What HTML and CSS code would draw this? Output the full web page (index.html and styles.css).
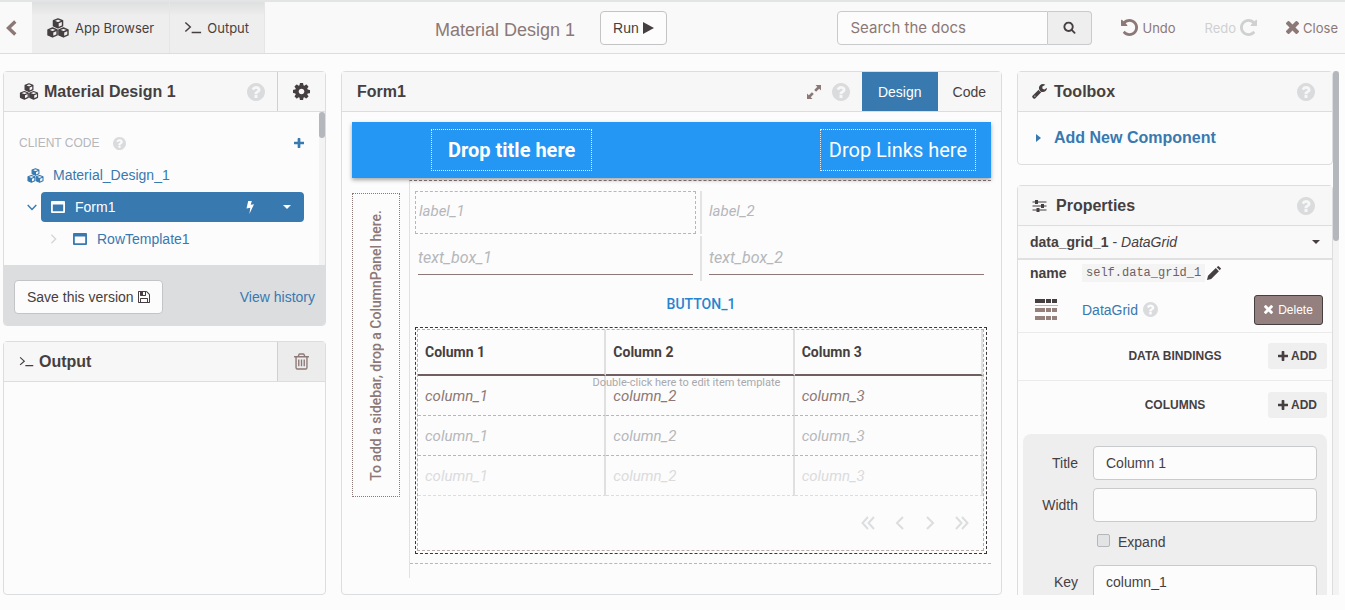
FILE: index.html
```html
<!DOCTYPE html>
<html lang="en">
<head>
<meta charset="utf-8">
<title>Material Design 1</title>
<link rel="stylesheet" href="styles.css">
</head>
<body>
<svg class="sprite" aria-hidden="true">
  <symbol id="cubes" viewBox="0 0 24 22"><g fill="none" stroke="currentColor" stroke-width="1.6" stroke-linejoin="round"><path d="M12 1l5 2v5.600L12 10.800 7 8.600V3zM7 3.200L12 5.400l5-2.200M12 5.400v5.400"/><path d="M6 11l5 2v5.600l-5 2.200-5-2.200V13zM1 13.200l5 2.200 5-2.200M6 15.400v5.400"/><path d="M18 11l5 2v5.600l-5 2.200-5-2.200V13zM13 13.200l5 2.200 5-2.200M18 15.400v5.400"/></g><path fill="currentColor" d="M7 3.200l5 2.200v5.400L7 8.600zM1 13.200l5 2.200v5.400l-5-2.200zM13 13.200l5 2.200v5.400l-5-2.200z"/></symbol>
  <symbol id="prompt" viewBox="0 0 20 14"><path d="M1.500 1.500L7 6.500l-5.500 5M8.500 12.500H19" fill="none" stroke="currentColor" stroke-width="1.600"/></symbol>
  <symbol id="help" viewBox="128 128 1536 1536"><path fill="currentColor" d="M1024 1376v-192q0-14-9-23t-23-9h-192q-14 0-23 9t-9 23v192q0 14 9 23t23 9h192q14 0 23-9t9-23zm256-672q0-88-55.500-163t-138.500-116-170-41q-243 0-371 213-15 24 8 42l132 100q7 6 19 6 16 0 25-12 53-68 86-92 34-24 86-24 48 0 85.500 26t37.500 59q0 38-20 61t-68 45q-63 28-115.500 86.500t-52.500 125.500v36q0 14 9 23t23 9h192q14 0 23-9t9-23q0-19 21.500-49.500t54.500-49.500q32-18 49-28.500t46-35 44.500-48 28-60.500 12.500-81zm384 192q0 209-103 385.500t-279.500 279.500-385.500 103-385.500-103-279.500-279.500-103-385.500 103-385.500 279.500-279.500 385.500-103 385.500 103 279.500 279.500 103 385.500z"/></symbol>
  <symbol id="cog" viewBox="128 128 1536 1536"><path fill="currentColor" d="M1152 896q0-106-75-181t-181-75-181 75-75 181 75 181 181 75 181-75 75-181zm512-109v222q0 12-8 23t-20 13l-185 28q-19 54-39 91 35 50 107 138 10 12 10 25t-9 23q-27 37-99 108t-94 71q-12 0-26-9l-138-108q-44 23-91 38-16 136-29 186-7 28-36 28h-222q-14 0-24.500-8.500t-11.500-21.500l-28-184q-49-16-90-37l-141 107q-10 9-25 9-14 0-25-11-126-114-165-168-7-10-7-23 0-12 8-23 15-21 51-66.500t54-70.500q-27-50-41-99l-183-27q-13-2-21-12.500t-8-23.500v-222q0-12 8-23t19-13l186-28q14-46 39-92-40-57-107-138-10-12-10-24 0-10 9-23 26-36 98.500-107.500t94.500-71.500q13 0 26 10l138 107q44-23 91-38 16-136 29-186 7-28 36-28h222q14 0 24.500 8.500t11.500 21.500l28 184q49 16 90 37l142-107q9-9 24-9 13 0 25 10 129 119 165 170 7 8 7 22 0 12-8 23-15 21-51 66.500t-54 70.500q26 50 41 98l183 28q13 2 21 12.500t8 23.500z"/></symbol>
  <symbol id="plus" viewBox="192 128 1408 1408"><path fill="currentColor" d="M1600 736v192q0 40-28 68t-68 28h-416v416q0 40-28 68t-68 28h-192q-40 0-68-28t-28-68v-416h-416q-40 0-68-28t-28-68v-192q0-40 28-68t68-28h416v-416q0-40 28-68t68-28h192q40 0 68 28t28 68v416h416q40 0 68 28t28 68z"/></symbol>
  <symbol id="search" viewBox="0 64 1792 1728"><path fill="currentColor" d="M1216 832q0-185-131.500-316.500t-316.500-131.500-316.500 131.500-131.500 316.500 131.500 316.500 316.500 131.500 316.500-131.500 131.500-316.500zm512 832q0 52-38 90t-90 38q-54 0-90-38l-343-342q-179 124-399 124-143 0-273.500-55.500t-225-150-150-225-55.500-273.500 55.500-273.500 150-225 225-150 273.500-55.500 273.500 55.500 225 150 150 225 55.500 273.500q0 220-124 399l343 343q37 37 37 90z"/></symbol>
  <symbol id="times" viewBox="302 366 1188 1188"><path fill="currentColor" d="M1490 1322q0 40-28 68l-136 136q-28 28-68 28t-68-28l-294-294-294 294q-28 28-68 28t-68-28l-136-136q-28-28-28-68t28-68l294-294-294-294q-28-28-28-68t28-68l136-136q28-28 68-28t68 28l294 294 294-294q28-28 68-28t68 28l136 136q28 28 28 68t-28 68l-294 294 294 294q28 28 28 68z"/></symbol>
  <symbol id="floppy" viewBox="128 128 1536 1536"><path fill="currentColor" d="M512 1536h768v-384h-768v384zm896 0h128v-896q0-14-10-38.500t-20-34.500l-281-281q-10-10-34-20t-39-10v416q0 40-28 68t-68 28h-576q-40 0-68-28t-28-68v-416h-128v1280h128v-416q0-40 28-68t68-28h832q40 0 68 28t28 68v416zm-384-928v-320q0-13-9.500-22.500t-22.500-9.500h-192q-13 0-22.500 9.500t-9.500 22.500v320q0 13 9.500 22.500t22.500 9.500h192q13 0 22.500-9.500t9.500-22.500zm640 32v928q0 40-28 68t-68 28h-1344q-40 0-68-28t-28-68v-1344q0-40 28-68t68-28h928q40 0 88 20t76 48l280 280q28 28 48 76t20 88z"/></symbol>
  <symbol id="trash" viewBox="192 128 1408 1536"><path fill="currentColor" d="M704 736v576q0 14-9 23t-23 9h-64q-14 0-23-9t-9-23v-576q0-14 9-23t23-9h64q14 0 23 9t9 23zm256 0v576q0 14-9 23t-23 9h-64q-14 0-23-9t-9-23v-576q0-14 9-23t23-9h64q14 0 23 9t9 23zm256 0v576q0 14-9 23t-23 9h-64q-14 0-23-9t-9-23v-576q0-14 9-23t23-9h64q14 0 23 9t9 23zm128 724v-948h-896v948q0 22 7 40.500t14.500 27 10.500 8.500h832q3 0 10.500-8.500t14.500-27 7-40.500zm-672-1076h448l-48-117q-7-9-17-11h-317q-10 2-17 11zm928 32v64q0 14-9 23t-23 9h-96v948q0 83-47 143.500t-113 60.500h-832q-66 0-113-58.500t-47-141.500v-952h-96q-14 0-23-9t-9-23v-64q0-14 9-23t23-9h309l70-167q15-37 54-63t79-26h320q40 0 79 26t54 63l70 167h309q14 0 23 9t9 23z"/></symbol>
  <symbol id="undo" viewBox="128 128 1536 1536"><path fill="currentColor" d="M1664 896q0 156-61 298t-164 245-245 164-298 61q-172 0-327-72.500t-264-204.500q-7-10-6.500-22.500t8.500-20.500l137-138q10-9 25-9 16 2 23 12 73 95 179 147t225 52q104 0 198.500-40.500t163.500-109.500 109.500-163.500 40.500-198.500-40.500-198.500-109.500-163.500-163.500-109.500-198.500-40.500q-98 0-188 35.500t-160 101.500l137 138q31 30 14 69-17 40-59 40h-448q-26 0-45-19t-19-45v-448q0-42 40-59 39-17 69 14l130 129q107-101 244.500-156.500t284.500-55.500q156 0 298 61t245 164 164 245 61 298z"/></symbol>
  <symbol id="redo" viewBox="0 0 16 16"><use href="#undo" width="16" height="16" transform="translate(16 0) scale(-1 1)"/></symbol>
  <symbol id="wrench" viewBox="64 128 1664 1664"><path fill="currentColor" d="M448 1472q0-26-19-45t-45-19-45 19-19 45 19 45 45 19 45-19 19-45zm644-420l-682 682q-37 37-90 37-52 0-91-37l-106-108q-38-36-38-90 0-53 38-91l681-681q39 98 114.500 173.500t173.500 114.500zm634-435q0 39-23 106-47 134-164.500 217.500t-258.500 83.500q-185 0-316.500-131.500t-131.500-316.500 131.500-316.500 316.500-131.500q58 0 121.500 16.500t107.500 46.500q16 11 16 28t-16 28l-293 169v224l193 107q5-3 79-48.500t135.500-81 70.500-35.500q15 0 23.500 10t8.500 25z"/></symbol>
  <symbol id="back" viewBox="0 0 11 16"><path d="M9.300 1.500L2.500 8l6.800 6.500" fill="none" stroke="currentColor" stroke-width="3.400"/></symbol>
  <symbol id="left" viewBox="0 0 10 14"><path d="M8 1L2 7l6 6" fill="none" stroke="currentColor" stroke-width="2"/></symbol>
  <symbol id="right" viewBox="0 0 10 14"><path d="M2 1l6 6-6 6" fill="none" stroke="currentColor" stroke-width="2"/></symbol>
  <symbol id="first" viewBox="0 0 14 14"><path d="M7 1L1.500 7 7 13M13 1L7.500 7l5.500 6" fill="none" stroke="currentColor" stroke-width="2"/></symbol>
  <symbol id="last" viewBox="0 0 14 14"><path d="M1 1l5.500 6L1 13M7 1l5.500 6L7 13" fill="none" stroke="currentColor" stroke-width="2"/></symbol>
  <symbol id="down" viewBox="0 0 10 7"><path d="M.7 1L5 5.500 9.300 1" fill="none" stroke="currentColor" stroke-width="1.400"/></symbol>
  <symbol id="window" viewBox="0 0 14 12"><path fill="currentColor" fill-rule="evenodd" d="M0 1q0-1 1-1h12q1 0 1 1v10q0 1-1 1H1q-1 0-1-1zM1.800 3.500v6.700h10.400V3.500z"/></symbol>
  <symbol id="bolt" viewBox="0 0 8 13"><path fill="currentColor" d="M2.200 0h3.600L4.700 3.800 8 3.200 3.400 13l.9-6.300L.5 7.500z"/></symbol>
  <symbol id="caret" viewBox="0 0 8 4"><path fill="currentColor" d="M0 0h8L4 4z"/></symbol>
  <symbol id="play" viewBox="0 0 11 12"><path fill="currentColor" d="M0 0l11 6L0 12z"/></symbol>
  <symbol id="side" viewBox="0 0 5 8"><path fill="currentColor" d="M0 0l5 4-5 4z"/></symbol>
  <symbol id="expand" viewBox="0 0 14 14"><path fill="currentColor" d="M8.500 0H14v5.500l-1.800-1.800-3.100 3.100-1.900-1.900 3.100-3.100zM5.500 14H0V8.500l1.800 1.800 3.100-3.100 1.900 1.900-3.100 3.100z"/></symbol>
  <symbol id="sliders" viewBox="0 0 14 12"><path fill="currentColor" d="M0 1.400h2.500V0h3v1.400H14v1.200H5.500V4h-3V2.600H0zM0 5.400h8.500V4h3v1.400H14v1.200h-2.500V8h-3V6.600H0zM0 9.400h4V8h3v1.400h7v1.200H7V12H4v-1.400H0z"/></symbol>
  <symbol id="pencil" viewBox="0 0 14 14"><path fill="currentColor" d="M0 14l1-4.200 7.800-7.700 3.100 3.100L4.200 13zM9.700 1.300L10.900.2q.4-.3.800 0l2.100 2.100q.3.400 0 .8l-1.100 1.200z"/></symbol>
  <symbol id="grid" viewBox="0 0 23 22"><path fill="#463f41" d="M0 0h10v4H0zM11 0h5v4h-5zM17 0h5v4h-5z"/><path fill="#b8b8bb" d="M0 6h23v1H0z"/><path fill="#96807d" d="M0 9h10v4H0zM11 9h5v4h-5zM17 9h5v4h-5zM0 17h10v4H0zM11 17h5v4h-5zM17 17h5v4h-5z"/></symbol>
</svg>

<div class="app">
  <header class="topbar">
    <button class="back" aria-label="Back"><svg width="11" height="16"><use href="#back"/></svg></button>
    <nav class="tabs">
      <button class="tab"><svg width="24" height="20"><use href="#cubes"/></svg>App Browser</button>
      <button class="tab"><svg width="18" height="13"><use href="#prompt"/></svg>Output</button>
    </nav>
    <h1 class="app-title">Material Design 1</h1>
    <button class="btn">Run <svg width="11" height="12"><use href="#play"/></svg></button>
    <form class="search">
      <input type="text" placeholder="Search the docs" aria-label="Search the docs">
      <button type="button" aria-label="Search"><svg width="13" height="13"><use href="#search"/></svg></button>
    </form>
    <div class="actions">
      <button><svg width="17" height="17"><use href="#undo"/></svg>Undo</button>
      <button disabled>Redo<svg width="17" height="17"><use href="#redo"/></svg></button>
      <button><svg width="13" height="13"><use href="#times"/></svg>Close</button>
    </div>
  </header>

  <main class="workspace">
    <aside class="left">
      <section class="panel">
        <div class="panel-head">
          <svg width="20" height="17"><use href="#cubes"/></svg>
          <h2>Material Design 1</h2>
          <button class="help push" aria-label="Help"><svg width="18" height="18"><use href="#help"/></svg></button>
          <button class="head-btn" aria-label="Settings"><svg width="17" height="17"><use href="#cog"/></svg></button>
        </div>
        <div class="tree-area">
          <div class="tree">
            <div class="tree-head">CLIENT CODE
              <button class="help" aria-label="Client code help"><svg width="13" height="13"><use href="#help"/></svg></button>
              <button class="add" aria-label="Add form"><svg width="10" height="10"><use href="#plus"/></svg></button>
            </div>
            <a class="node root" href="#"><svg width="17" height="15"><use href="#cubes"/></svg>Material_Design_1</a>
            <div class="branch">
              <button class="twist" aria-label="Collapse"><svg width="10" height="7"><use href="#down"/></svg></button>
              <div class="selected"><a href="#"><svg width="14" height="12"><use href="#window"/></svg>Form1</a>
                <button aria-label="Events"><svg width="8" height="13"><use href="#bolt"/></svg></button>
                <button aria-label="Menu"><svg width="8" height="4"><use href="#caret"/></svg></button>
              </div>
            </div>
            <div class="branch child">
              <button class="twist pale" aria-label="Expand"><svg width="7" height="10"><use href="#right"/></svg></button>
              <a class="node" href="#"><svg width="14" height="12"><use href="#window"/></svg>RowTemplate1</a>
            </div>
            <div class="tree-head next">
              <button class="help" aria-label="Help"><svg width="13" height="13"><use href="#help"/></svg></button>
              <button class="add" aria-label="Add module"><svg width="10" height="10"><use href="#plus"/></svg></button>
            </div>
          </div>
          <div class="scroll"><div class="thumb short"></div></div>
        </div>
        <div class="panel-foot">
          <button class="btn">Save this version <svg width="12" height="12"><use href="#floppy"/></svg></button>
          <a href="#">View history</a>
        </div>
      </section>
      <section class="panel grow">
        <div class="panel-head">
          <svg width="15" height="11"><use href="#prompt"/></svg>
          <h2>Output</h2>
          <button class="head-btn trash push" aria-label="Clear output"><svg width="15" height="17"><use href="#trash"/></svg></button>
        </div>
      </section>
    </aside>

    <section class="panel editor">
      <div class="panel-head">
        <h2>Form1</h2>
        <button class="expand push" aria-label="Full screen"><svg width="14" height="14"><use href="#expand"/></svg></button>
        <button class="help" aria-label="Help"><svg width="18" height="18"><use href="#help"/></svg></button>
        <div class="modes"><button class="on">Design</button><button>Code</button></div>
      </div>
      <div class="canvas">
        <div class="appbar">
          <div class="slot title-slot">Drop title here</div>
          <div class="slot">Drop Links here</div>
        </div>
        <div class="stage">
          <div class="sidebar-slot"><span>To add a sidebar, drop a ColumnPanel here.</span></div>
          <div class="form">
            <div class="form-body">
              <div class="pair">
                <div class="label picked">label_1</div>
                <div class="label">label_2</div>
              </div>
              <div class="pair">
                <div class="field"><input type="text" placeholder="text_box_1" aria-label="text_box_1"></div>
                <div class="field"><input type="text" placeholder="text_box_2" aria-label="text_box_2"></div>
              </div>
              <button class="flat">BUTTON_1</button>
              <div class="data-grid">
                <div class="grid-inner">
                  <table>
                    <thead><tr><th>Column 1</th><th>Column 2</th><th>Column 3</th></tr></thead>
                    <tbody>
                      <tr><td>column_1</td><td>column_2</td><td>column_3</td></tr>
                      <tr class="dim"><td>column_1</td><td>column_2</td><td>column_3</td></tr>
                      <tr class="faint"><td>column_1</td><td>column_2</td><td>column_3</td></tr>
                    </tbody>
                  </table>
                  <div class="hint">Double-click here to edit item template</div>
                  <div class="pager">
                    <button aria-label="First"><svg width="14" height="14"><use href="#first"/></svg></button>
                    <button aria-label="Previous"><svg width="10" height="14"><use href="#left"/></svg></button>
                    <button aria-label="Next"><svg width="10" height="14"><use href="#right"/></svg></button>
                    <button aria-label="Last"><svg width="14" height="14"><use href="#last"/></svg></button>
                  </div>
                </div>
              </div>
            </div>
          </div>
        </div>
      </div>
    </section>

    <aside class="right">
      <div class="right-scroll">
        <section class="panel">
          <div class="panel-head">
            <svg width="15" height="15"><use href="#wrench"/></svg>
            <h2>Toolbox</h2>
            <button class="help push" aria-label="Help"><svg width="18" height="18"><use href="#help"/></svg></button>
          </div>
          <a class="add-component" href="#"><svg width="5" height="8"><use href="#side"/></svg>Add New Component</a>
        </section>
        <section class="panel props">
          <div class="panel-head">
            <svg width="15" height="12"><use href="#sliders"/></svg>
            <h2>Properties</h2>
            <button class="help push" aria-label="Help"><svg width="18" height="18"><use href="#help"/></svg></button>
          </div>
          <button class="chooser"><span><b>data_grid_1</b> - <i>DataGrid</i></span><svg width="8" height="4"><use href="#caret"/></svg></button>
          <div class="name-row"><b>name</b><code>self.data_grid_1</code><button aria-label="Rename"><svg width="14" height="14"><use href="#pencil"/></svg></button></div>
          <div class="type-row">
            <svg width="23" height="22"><use href="#grid"/></svg>
            <a href="#">DataGrid</a>
            <button class="help" aria-label="DataGrid help"><svg width="15" height="15"><use href="#help"/></svg></button>
            <button class="delete"><svg width="9" height="9"><use href="#times"/></svg>Delete</button>
          </div>
          <div class="section-row ruled"><h3>DATA BINDINGS</h3><button><svg width="10" height="10"><use href="#plus"/></svg>ADD</button></div>
          <div class="section-row"><h3>COLUMNS</h3><button><svg width="10" height="10"><use href="#plus"/></svg>ADD</button></div>
          <div class="column-card">
            <label for="c-title">Title</label><input id="c-title" type="text" value="Column 1">
            <label for="c-width">Width</label><input id="c-width" type="text">
            <div class="check"><input id="c-expand" type="checkbox"><label for="c-expand">Expand</label></div>
            <label for="c-key">Key</label><input id="c-key" type="text" value="column_1">
          </div>
        </section>
      </div>
      <div class="scroll"><div class="thumb tall"></div></div>
    </aside>
  </main>
</div>
</body>
</html>
```
FILE: styles.css
```css
:root {
  --ink: #463f41;
  --brown: #8c7876;
  --grey: #b5b7bb;
  --line: #dcddde;
  --link: #3879b0;
  --page: #fcfcfc;
  --head: #f7f7f7;
  --material: #2496f3;
}

* { box-sizing: border-box; }

body {
  margin: 0;
  background: var(--page);
  color: var(--ink);
  font: 14px/20px "Liberation Sans", Arial, sans-serif;
}

button {
  display: flex;
  align-items: center;
  justify-content: center;
  padding: 0;
  border: 0;
  background: none;
  color: inherit;
  font: inherit;
}

a { color: var(--link); text-decoration: none; }
svg { display: block; flex: none; }
h1, h2, h3 { margin: 0; }
.sprite { position: absolute; width: 0; height: 0; }
.push { margin-left: auto; }

.app { display: flex; flex-direction: column; height: 100vh; overflow: hidden; }

/* Top bar */
.topbar {
  display: flex;
  align-items: center;
  flex: none;
  height: 54px;
  padding-right: 7px;
  background: #f9f9f9;
  border-top: 2px solid #e3e4e4;
  border-bottom: 1px solid var(--line);
}
.back { width: 22px; height: 50px; margin-right: 10px; color: var(--brown); }
.tabs { display: flex; align-self: stretch; }
.tab {
  gap: 5px;
  padding: 0 15px 0 14px;
  background: linear-gradient(#dedfe0, #eee 14px);
  font: 13px/20px Inter, sans-serif;
  border-right: 1px solid #e6e6e6;
}
.app-title {
  margin: 4px 25px 0 170px;
  color: var(--brown);
  font-size: 18px;
  font-weight: 400;
  line-height: 24px;
  white-space: nowrap;
}
.btn {
  gap: 4px;
  height: 34px;
  padding: 0 12px;
  background: #fcfcfc;
  border: 1px solid #c3c4c6;
  border-radius: 4px;
  white-space: nowrap;
}
.search { display: flex; width: 255px; margin-left: auto; }
.search input {
  flex: 1;
  min-width: 0;
  height: 34px;
  padding: 0 12px;
  background: var(--page);
  border: 1px solid #c9cacc;
  border-radius: 4px 0 0 4px;
  font: 15px/20px Inter, sans-serif;
}
.search input::placeholder { color: var(--brown); opacity: 1; }
.search button {
  width: 44px;
  background: #eee;
  border: 1px solid #c9cacc;
  border-left: 0;
  border-radius: 0 4px 4px 0;
}
.actions { display: flex; gap: 29px; margin-left: 29px; color: var(--brown); font: 13px/20px Inter, sans-serif; }
.actions button { gap: 4px; }
.actions button:disabled { color: #cfd0d2; }

/* Panels */
.workspace { display: flex; gap: 15px; flex: 1; min-height: 0; padding: 17px 6px 15px 3px; }
.left { display: flex; flex: 0 0 323px; flex-direction: column; gap: 15px; }
.panel { background: var(--page); border: 1px solid var(--line); border-radius: 4px; }
.grow { flex: 1; }
.panel-head {
  display: flex;
  align-items: center;
  height: 40px;
  padding-left: 14px;
  background: var(--head);
  border-bottom: 1px solid var(--line);
}
.panel-head h2 { margin-left: 5px; font-size: 16px; line-height: 20px; }
.left .panel-head { padding-left: 15px; }
.help { color: #dadbdd; }
.head-btn { width: 48px; height: 39px; margin-left: 12px; border-left: 1px solid #cfd0d1; }
.trash { margin-left: auto; background: #ececec; color: var(--brown); }

.scroll { width: 6px; background: #f3f3f3; }
.thumb { width: 6px; background: #b4b8bc; border-radius: 3px; }
.short { height: 26px; }
.tall { height: 170px; }

.tree-area { display: flex; height: 153px; overflow: hidden; }
.tree { flex: 1; padding: 15px 15px 0; }
.tree-head { display: flex; align-items: center; height: 32px; color: var(--grey); font-size: 12px; }
.tree-head .help { margin-left: 14px; }
.tree-head .add { margin-left: auto; width: 10px; color: var(--link); }
.next .help { margin-left: 101px; }
.node { display: flex; align-items: center; gap: 9px; height: 32px; }
.root { padding-left: 8px; }
.branch { display: flex; align-items: center; height: 32px; padding-left: 8px; }
.twist { width: 10px; height: 20px; margin-right: 4px; color: var(--link); }
.pale { color: #d5d6d8; }
.child { padding-left: 29px; }
.child .twist { margin-right: 15px; }
.child .node { gap: 10px; }
.selected {
  display: flex;
  align-items: center;
  flex: 1;
  height: 30px;
  padding: 0 13px 0 10px;
  background: var(--link);
  border-radius: 4px;
  color: #fff;
}
.selected a { display: flex; align-items: center; gap: 10px; flex: 1; color: #fff; }
.selected button + button { margin-left: 29px; }
.panel-foot {
  display: flex;
  align-items: center;
  justify-content: space-between;
  height: 60px;
  padding: 4px 10px 0;
  background: #dcdddf;
  border-radius: 0 0 3px 3px;
}

/* Design canvas */
.editor { display: flex; flex: 1; flex-direction: column; min-width: 0; }
.editor .panel-head { flex: none; padding-left: 10px; }
.expand { color: var(--brown); margin-right: 11px; }
.modes { display: flex; align-self: stretch; margin-left: 12px; }
.modes button { padding: 0 15px; }
.modes .on { padding: 0 16px; background: var(--link); color: #fff; }
.canvas { flex: 1; min-height: 0; padding: 10px; font-family: Roboto, sans-serif; }
.appbar {
  display: flex;
  align-items: center;
  justify-content: space-between;
  position: relative;
  height: 56px;
  padding: 0 15px 0 79px;
  background: var(--material);
  box-shadow: 0 2px 4px rgba(0, 0, 0, .35);
}
.slot {
  height: 42px;
  padding: 0 8px;
  border: 1px dotted #e8eef5;
  color: #fff;
  font-size: 20px;
  line-height: 40px;
  white-space: nowrap;
}
.title-slot { padding: 0 16px; font-weight: 700; }
.stage { display: flex; gap: 9px; }
.sidebar-slot {
  display: flex;
  align-items: center;
  justify-content: center;
  flex: 0 0 48px;
  height: 304px;
  margin-top: 15px;
  border: 1px dotted var(--brown);
  color: var(--brown);
}
.sidebar-slot span { writing-mode: vertical-rl; transform: rotate(180deg); font-weight: 500; white-space: nowrap; }
.form {
  flex: 1;
  min-width: 0;
  height: 398px;
  margin-top: 2px;
  border-top: 1px dashed var(--brown);
  border-left: 1px solid #e1e1e2;
}
.form-body { padding: 10px 4px 9px 5px; border-bottom: 1px dashed var(--grey); }
.pair { display: grid; grid-template-columns: 1fr 1fr; gap: 8px; }
.label {
  height: 43px;
  padding: 0 3px;
  color: var(--grey);
  font-size: 15px;
  font-style: italic;
  line-height: 40px;
}
.picked { border: 1px dashed #b5b7bb; line-height: 38px; }
.pair > :nth-child(1) { margin-right: 1px; }
.pair > :nth-child(2) { border-left: 2px solid #e3e3e4; margin-left: -5px; padding-left: 7px; }
.field { height: 45px; margin-top: 2px; padding: 4px 3px 0; }
.field input {
  width: 100%;
  height: 35px;
  padding: 0;
  background: none;
  border: 0;
  border-bottom: 1px solid var(--brown);
  font: 16px/20px Roboto, sans-serif;
}
.field input::placeholder { color: var(--grey); font-style: italic; opacity: 1; }
.flat { width: 100%; height: 46px; color: #2784d0; font-weight: 500; }
.data-grid { padding: 1px 2px 2px 1px; border: 1px dashed #3b3537; }
.grid-inner { position: relative; border: 1px dashed #b9abaa; }
.grid-inner table { width: 100%; border-spacing: 0; table-layout: fixed; }
.grid-inner th, .grid-inner td { padding: 0 7px; border-right: 2px solid #e0e0e1; text-align: left; }
.grid-inner th { height: 46px; border-bottom: 2px solid #6f5f5f; font-weight: 700; }
.grid-inner td { height: 40px; border-bottom: 1px dashed var(--grey); color: var(--brown); font-size: 15px; font-style: italic; }
.grid-inner .dim td { color: var(--grey); }
.grid-inner .faint td { color: #dadbdd; border-bottom-color: var(--line); }
.hint { position: absolute; top: 45px; left: 0; right: 28px; color: #a9a9ac; font-size: 11px; line-height: 16px; text-align: center; }
.pager { display: flex; align-items: center; justify-content: flex-end; gap: 20px; height: 54px; padding-right: 14px; color: var(--line); }

/* Right column */
.right { display: flex; flex: 0 0 322px; min-height: 0; overflow: hidden; }
.right-scroll { flex: 1; min-width: 0; overflow: hidden; }
.right .panel-head { padding-right: 17px; }
.right .panel-head h2 { margin-left: 7px; }
.add-component {
  display: flex;
  align-items: center;
  gap: 13px;
  height: 52px;
  padding-left: 18px;
  font-size: 16px;
  font-weight: 700;
}
.props { margin-top: 20px; }
.right .props .panel-head h2 { margin-left: 9px; }
.chooser {
  justify-content: space-between;
  width: 100%;
  height: 34px;
  padding: 0 12px;
  background: #f9f9f9;
  border-bottom: 2px solid #e0e0e1;
}
.name-row { display: flex; align-items: center; height: 25px; padding-left: 12px; }
.name-row b { width: 52px; }
.name-row code { padding: 0 4px; background: #f4f4f4; font: 12px/18px "Liberation Mono", monospace; color: #6e6062; }
.name-row button { margin-left: 2px; }
.type-row {
  display: flex;
  align-items: center;
  height: 48px;
  padding: 2px 9px 0 17px;
  border-bottom: 1px solid #ebebeb;
}
.type-row a { margin: 0 5px 0 24px; }
.delete {
  gap: 5px;
  width: 69px;
  height: 30px;
  margin-left: auto;
  background: #94807e;
  border: 1px solid var(--ink);
  border-radius: 3px;
  color: #fff;
  font-size: 12px;
}
.section-row { display: grid; grid-template-columns: 1fr auto 1fr; align-items: center; height: 48px; padding: 0 5px 1px; }
.ruled { border-bottom: 1px solid #ebebeb; }
.section-row h3 { grid-column: 2; font-size: 12px; }
.section-row button {
  justify-self: end;
  gap: 3px;
  width: 59px;
  height: 26px;
  background: #efefef;
  border-radius: 3px;
  font-size: 12px;
  font-weight: 700;
}
.column-card {
  display: grid;
  grid-template-columns: 45px 1fr;
  align-items: center;
  gap: 8px 15px;
  margin: 5px 5px 0;
  padding: 12px 10px;
  background: #eee;
  border-radius: 8px;
}
.column-card > label { text-align: right; }
.column-card input[type="text"] {
  width: 100%;
  height: 34px;
  padding: 0 12px;
  background: var(--page);
  border: 1px solid #c9cacc;
  border-radius: 4px;
  color: inherit;
  font: inherit;
}
.check { display: flex; align-items: flex-start; gap: 8px; grid-column: 2; height: 27px; padding: 2px 0 0 4px; }
.check input {
  appearance: none;
  width: 13px;
  height: 13px;
  margin: 2px 0 0;
  background: #e2e3e4;
  border: 1px solid #b5b7bb;
  border-radius: 2px;
}
```
